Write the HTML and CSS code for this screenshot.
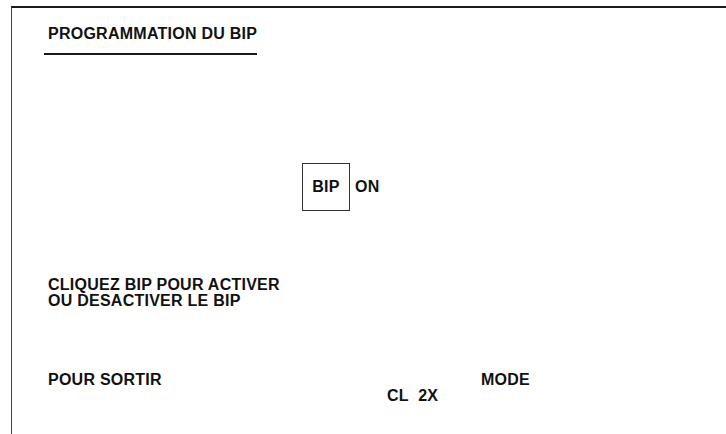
FILE: index.html
```html
<!DOCTYPE html>
<html lang="fr">
<head>
<meta charset="utf-8">
<title>Programmation du BIP</title>
<link rel="stylesheet" href="styles.css">
</head>
<body>
<div class="frame">
  <div class="title">PROGRAMMATION DU BIP</div>
  <div class="rule"></div>
  <div class="toggle-row">
    <div class="bip-box">BIP</div>
    <div class="state">ON</div>
  </div>
  <div class="hint">CLIQUEZ BIP POUR ACTIVER<br>OU DESACTIVER LE BIP</div>
  <div class="footer">
    <div class="exit">POUR SORTIR</div>
    <div class="mode">MODE</div>
    <div class="keys">CL&nbsp;&nbsp;2X</div>
  </div>
</div>
</body>
</html>
```

FILE: styles.css
```css
html, body {
  margin: 0;
  padding: 0;
  background: #ffffff;
}

body {
  font-family: "Liberation Sans", Arial, sans-serif;
  font-weight: bold;
  font-size: 16px;
  letter-spacing: 0.25px;
  color: #111111;
  width: 726px;
  height: 434px;
  overflow: hidden;
}

.frame {
  margin: 6px 0 0 11px;
  height: 440px;
  border-top: 2px solid #1a1a1a;
  border-left: 1px solid #444444;
  display: flex;
  flex-direction: column;
}

.title {
  margin: 17px 0 0 36px;
  line-height: 18px;
}

.rule {
  margin: 10px 0 0 32px;
  width: 213px;
  height: 2px;
  background: #1a1a1a;
}

.toggle-row {
  margin: 108px 0 0 290px;
  display: flex;
  align-items: center;
  gap: 5px;
}

.bip-box {
  width: 46px;
  height: 46px;
  border: 1px solid #333333;
  display: flex;
  align-items: center;
  justify-content: center;
}

.state {
  line-height: 18px;
}

.hint {
  margin: 66px 0 0 36px;
  line-height: 16px;
}

.footer {
  margin: 63px 0 0 36px;
  display: grid;
  grid-template-columns: 339px 94px auto;
  grid-template-rows: 16px 16px;
  line-height: 16px;
}

.exit {
  grid-column: 1;
  grid-row: 1;
}

.mode {
  grid-column: 3;
  grid-row: 1;
}

.keys {
  grid-column: 2;
  grid-row: 2;
}
```
